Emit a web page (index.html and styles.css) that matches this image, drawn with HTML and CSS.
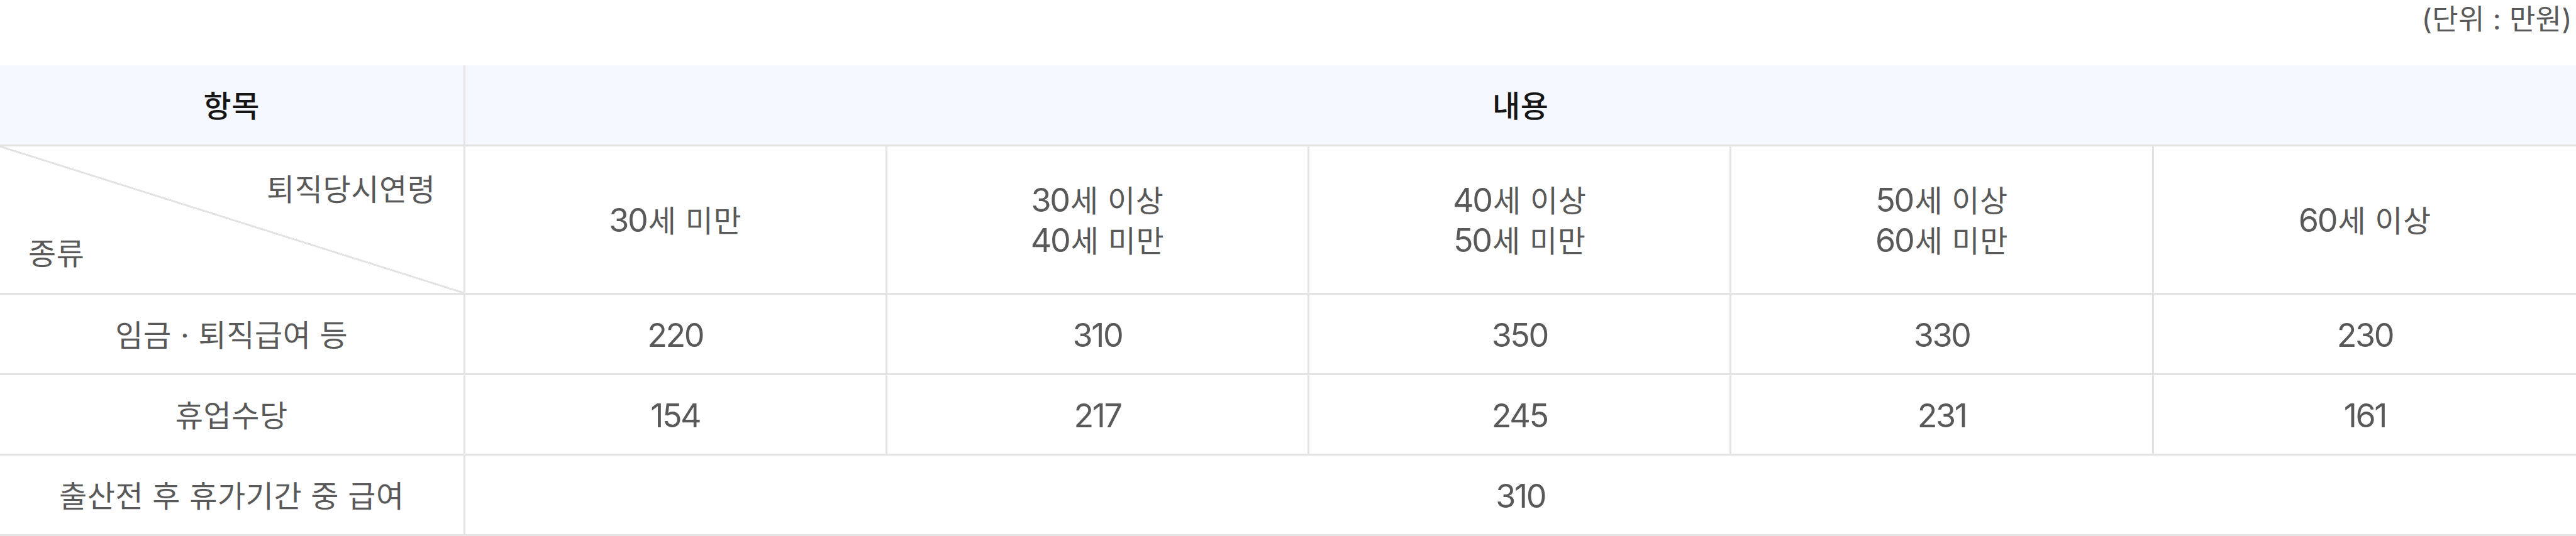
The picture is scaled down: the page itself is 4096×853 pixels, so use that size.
FILE: index.html
```html
<!DOCTYPE html>
<html lang="ko">
<head>
<meta charset="utf-8">
<title>표</title>
<link rel="stylesheet" href="styles.css">
</head>
<body>
<div class="page">
  <div class="unit"><span class="unit-text">(단위 : 만원)</span></div>
  <div class="grid">
    <div class="cell head"><span>항목</span></div>
    <div class="cell head span5 last"><span>내용</span></div>

    <div class="cell diag">
      <span class="diag-top">퇴직당시연령</span>
      <span class="diag-bottom">종류</span>
    </div>
    <div class="cell"><span><span class="n">30</span>세 미만</span></div>
    <div class="cell"><span><span class="n">30</span>세 이상<br><span class="n">40</span>세 미만</span></div>
    <div class="cell"><span><span class="n">40</span>세 이상<br><span class="n">50</span>세 미만</span></div>
    <div class="cell"><span><span class="n">50</span>세 이상<br><span class="n">60</span>세 미만</span></div>
    <div class="cell last"><span><span class="n">60</span>세 이상</span></div>

    <div class="cell"><span>임금 · 퇴직급여 등</span></div>
    <div class="cell num"><span>220</span></div>
    <div class="cell num"><span>310</span></div>
    <div class="cell num"><span>350</span></div>
    <div class="cell num"><span>330</span></div>
    <div class="cell num last"><span>230</span></div>

    <div class="cell"><span>휴업수당</span></div>
    <div class="cell num"><span>154</span></div>
    <div class="cell num"><span>217</span></div>
    <div class="cell num"><span>245</span></div>
    <div class="cell num"><span>231</span></div>
    <div class="cell num last"><span>161</span></div>

    <div class="cell"><span>출산전 후 휴가기간 중 급여</span></div>
    <div class="cell num span5 last"><span>310</span></div>
  </div>
</div>
</body>
</html>
```
FILE: styles.css
```css
html, body {
  margin: 0;
  padding: 0;
  background: #ffffff;
}
.page {
  width: 4096px;
  font-family: Inter, "Noto Sans CJK KR", sans-serif;
  color: #595959;
  font-size: 48px;
  letter-spacing: 0.6px;
}
.unit {
  height: 104px;
  display: flex;
  justify-content: flex-end;
  align-items: flex-start;
  padding-right: 6px;
  box-sizing: border-box;
}
.unit-text {
  font-size: 45px;
  line-height: 62px;
  letter-spacing: 0.3px;
}
.grid {
  display: grid;
  grid-template-columns: 739.6px repeat(5, 1fr);
  grid-template-rows: 129px 236px 128px 128px 128px;
}
.cell {
  box-sizing: border-box;
  border-right: 3px solid #e3e3e3;
  border-bottom: 3px solid #e3e3e3;
  display: flex;
  align-items: center;
  justify-content: center;
  padding-top: 5px;
  text-align: center;
  line-height: 62.6px;
  white-space: nowrap;
}
.cell.last {
  border-right: none;
}
.span5 {
  grid-column: span 5;
}
.num,
.n {
  font-size: 52px;
  letter-spacing: -2.4px;
}
.n {
  margin-right: 2.4px;
}
.head {
  background: #f5f8fe;
  color: #161616;
  font-weight: 500;
}
.diag {
  flex-direction: column;
  align-items: stretch;
  justify-content: space-between;
  padding: 37.6px 44px 30.4px 45px;
  background: linear-gradient(to top right, transparent calc(50% - 1.5px), #e3e3e3 calc(50% - 1.5px), #e3e3e3 calc(50% + 1.5px), transparent calc(50% + 1.5px));
}
.diag-top {
  text-align: right;
}
.diag-bottom {
  text-align: left;
}
```
